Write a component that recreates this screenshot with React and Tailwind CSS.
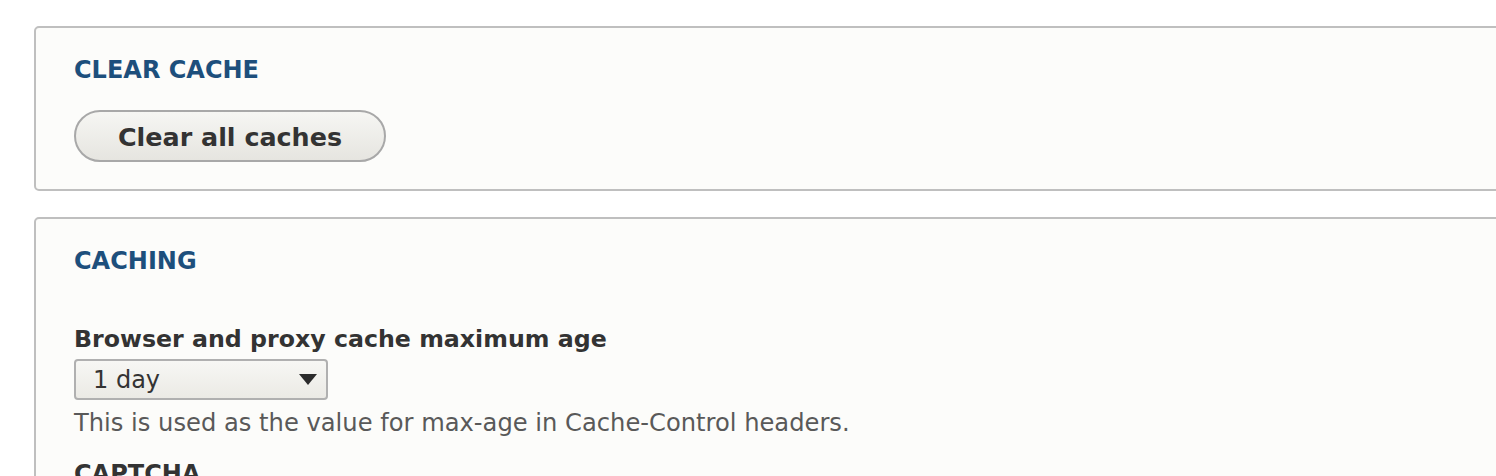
export default function App() {
  const font = { fontFamily: '"DejaVu Sans", Verdana, sans-serif' };
  return (
    <div className="h-[476px] w-full overflow-hidden bg-white" style={font}>
      <div className="flex w-[1520px] flex-col gap-[26px] pl-[34px] pt-[26px]">
        <section className="rounded-[5px] border-2 border-[#bfbfbf] bg-[#fcfcfa] px-[38px] pb-[27px] pt-[28px]">
          <h2 className="text-[24px] font-bold leading-[29px] text-[#1d4f7c]">CLEAR CACHE</h2>
          <button className="mt-[25px] flex h-[52px] w-[312px] items-center justify-center rounded-full border-2 border-[#a8a8a8] bg-gradient-to-b from-[#f6f6f3] to-[#e6e5e0] pt-[3px] text-[25.4px] font-bold leading-none text-[#333]">
            Clear all caches
          </button>
        </section>
        <section className="h-[400px] rounded-[5px] border-2 border-[#bfbfbf] bg-[#fcfcfa] px-[38px] pt-[28px]">
          <h2 className="text-[24px] font-bold leading-[29px] text-[#1d4f7c]">CACHING</h2>
          <div className="mt-[49px] text-[23.7px] font-bold leading-[29px] text-[#333]">
            Browser and proxy cache maximum age
          </div>
          <div className="mt-[5px] flex h-[41px] w-[254px] items-center justify-between rounded-[4px] border-2 border-[#b0b0b0] bg-gradient-to-b from-[#f7f7f4] to-[#ebeae5] pl-[17px] pr-[9px]">
            <span className="text-[24px] leading-none text-[#333]">1 day</span>
            <svg width="18" height="11" viewBox="0 0 18 11">
              <polygon points="0,0 18,0 9,11" fill="#2b2b2b" />
            </svg>
          </div>
          <p className="mt-[9px] text-[24.2px] leading-[29px] text-[#595959]">
            This is used as the value for max-age in Cache-Control headers.
          </p>
          <div className="mt-[22px] text-[24px] font-bold leading-[29px] text-[#333]">CAPTCHA</div>
        </section>
      </div>
    </div>
  );
}
